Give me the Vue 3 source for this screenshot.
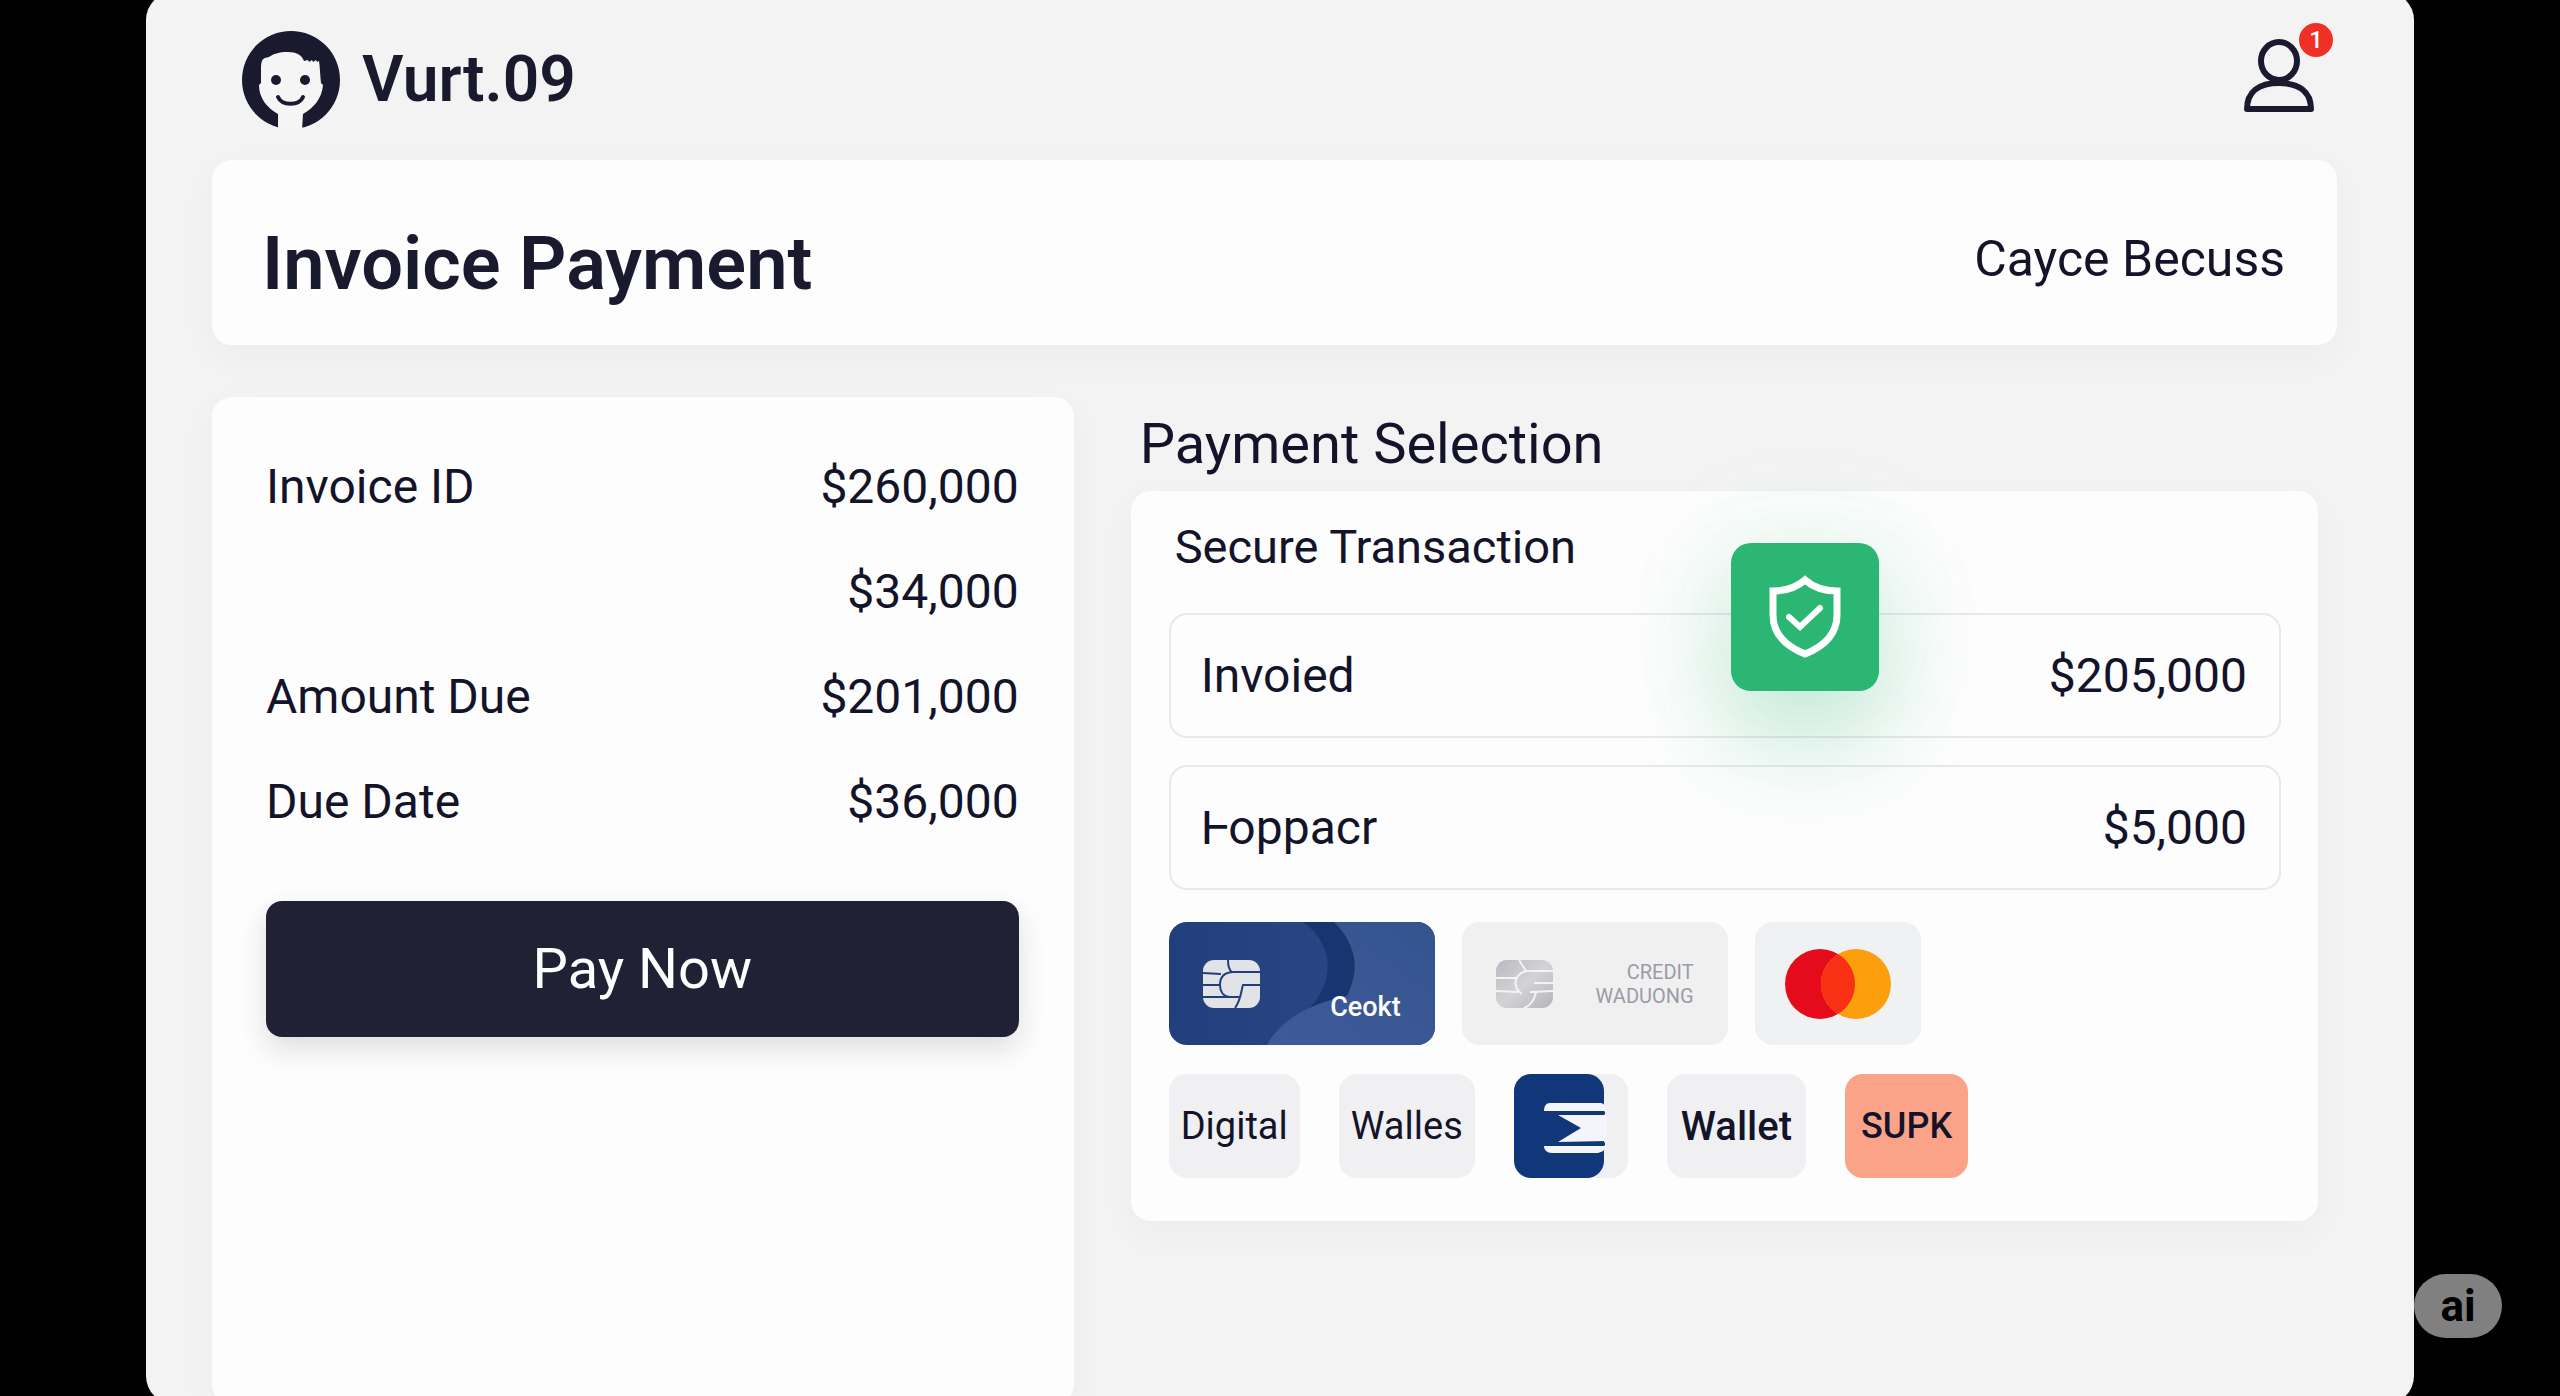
<script setup>
const summary = [
  { label: 'Invoice ID', value: '$260,000' },
  { label: '', value: '$34,000' },
  { label: 'Amount Due', value: '$201,000' },
  { label: 'Due Date', value: '$36,000' },
]

const lines = [
  { label: 'Invoied', value: '$205,000' },
  { label: 'Ⱶoppacr', value: '$5,000' },
]
</script>

<template>
  <div class="page">
    <main class="panel">
      <header class="topbar">
        <a class="brand" href="#">
          <svg class="brand-mark" viewBox="0 0 98 98" aria-hidden="true">
            <circle cx="49" cy="49" r="49" fill="#1a1a2f" />
            <path
              fill="#f5f5f5"
              d="M36 99V83C25 77 17 67 17 54L19 52V38C19 31 20 28 23 27L27 26C31 23 37 21 46 21C54 21 60 24 62 30L66 29L67 31L70 29L71 31L74 29L75 31L77 30C78 36 78 44 79 52L81 54C80 67 72 77 61 83L60 99Z"
            />
            <circle cx="34" cy="49" r="5" fill="#1a1a2f" />
            <circle cx="63" cy="49" r="5" fill="#1a1a2f" />
            <path d="M36 66C40 75 57 75 61 66" fill="none" stroke="#1a1a2f" stroke-width="4" stroke-linecap="round" />
          </svg>
          <span>Vurt.09</span>
        </a>
        <button class="account" type="button" aria-label="Account, 1 notification">
          <svg viewBox="0 0 70 74" aria-hidden="true">
            <g fill="none" stroke="#1a1a2f" stroke-width="6" stroke-linejoin="round">
              <ellipse cx="35" cy="22" rx="18" ry="19" />
              <path d="M3 70C3 53 15 44 35 44S67 53 67 70Z" />
            </g>
          </svg>
          <span class="count">1</span>
        </button>
      </header>

      <section class="card heading">
        <h1>Invoice Payment</h1>
        <span class="customer">Cayce Becuss</span>
      </section>

      <div class="columns">
        <section class="card summary">
          <dl>
            <div v-for="row in summary" :key="row.value" class="row">
              <dt>{{ row.label }}</dt>
              <dd>{{ row.value }}</dd>
            </div>
          </dl>
          <button class="pay" type="button">Pay Now</button>
        </section>

        <section class="selection">
          <h2>Payment Selection</h2>
          <div class="card methods">
            <h3>Secure Transaction</h3>
            <div class="lines">
              <div v-for="line in lines" :key="line.label" class="line">
                <span>{{ line.label }}</span>
                <span>{{ line.value }}</span>
              </div>
            </div>

            <div class="cards">
              <button class="bank blue" type="button">
                <svg class="waves" viewBox="0 0 266 123" preserveAspectRatio="none" aria-hidden="true">
                  <defs>
                    <linearGradient id="deep" x1="0" x2="1">
                      <stop offset="0" stop-color="#213f7c" />
                      <stop offset="1" stop-color="#2c4a86" />
                    </linearGradient>
                    <linearGradient id="light" x1="0" y1="1" x2="1" y2="0">
                      <stop offset="0" stop-color="#3d5b9a" />
                      <stop offset="1" stop-color="#34548e" />
                    </linearGradient>
                  </defs>
                  <rect width="266" height="123" fill="url(#deep)" />
                  <path fill="#17366f" d="M134 0C165 22 168 60 137 90L178 74C190 50 190 25 165 0Z" />
                  <path fill="url(#light)" d="M165 0C190 25 190 50 178 74C150 80 115 92 98 123H266V0Z" />
                </svg>
                <svg class="chip" viewBox="0 0 57 48" aria-hidden="true">
                  <rect width="57" height="48" rx="11" fill="#e2e3e7" />
                  <path
                    fill="none"
                    stroke="#213f7c"
                    stroke-width="2"
                    d="M0 13L18 14M0 25H17M0 37H37M25 0C25 6 26 10 29 12M57 12H31C21 12 17 17 17 25C17 31 20 36 26 37M57 25H40C38 31 38 40 32 48"
                  />
                </svg>
                <span class="bank-name">Ceokt</span>
              </button>
              <button class="bank grey" type="button">
                <svg class="chip" viewBox="0 0 57 48" aria-hidden="true">
                  <defs>
                    <linearGradient id="silver" x1="0" y1="0" x2="1" y2="1">
                      <stop offset="0" stop-color="#b9b9bf" />
                      <stop offset="0.5" stop-color="#d3d3d7" />
                      <stop offset="1" stop-color="#b4b4ba" />
                    </linearGradient>
                  </defs>
                  <rect width="57" height="48" rx="11" fill="url(#silver)" />
                  <path
                    fill="none"
                    stroke="#f4f4f5"
                    stroke-width="2"
                    d="M0 18H20M0 31L22 32M23 0L30 11M57 11H32C22 12 18 20 20 26C21 30 23 32 26 34M38 23H57M34 32L57 31M40 32C38 41 35 45 28 48"
                  />
                </svg>
                <span class="bank-note">CREDIT<br />WADUONG</span>
              </button>
              <button class="bank network" type="button" aria-label="Mastercard">
                <svg viewBox="0 0 106 70" aria-hidden="true">
                  <circle cx="35" cy="35" r="35" fill="#e50b1c" />
                  <circle cx="71" cy="35" r="35" fill="#fb9f0c" />
                  <path fill="#f83014" d="M53 5A35 35 0 0 1 53 65A35 35 0 0 1 53 5Z" />
                </svg>
              </button>
            </div>

            <div class="wallets">
              <button class="tile" type="button">Digital</button>
              <button class="tile" type="button">Walles</button>
              <button class="tile logo" type="button" aria-label="Bank wallet">
                <svg viewBox="0 0 114 104" aria-hidden="true">
                  <rect width="90" height="104" rx="17" fill="#10377a" />
                  <path
                    fill="#f3f5fa"
                    d="M30 37C30 32 32 29 36 29H87C91 30 92 33 92 37ZM44 41H93V67L44 68L67 54ZM30 72H93C90 77 87 79 82 79H38C33 79 30 76 30 72Z"
                  />
                  <path stroke="#10377a" stroke-width="3" d="M60 39H91M60 70H91" />
                </svg>
              </button>
              <button class="tile strong" type="button">Wallet</button>
              <button class="tile coral" type="button">SUPK</button>
            </div>

            <div class="shield">
              <svg viewBox="0 0 148 148" aria-hidden="true">
                <g fill="none" stroke="#fff" stroke-width="7">
                  <path d="M74 37C66 44 55 48 42 48V72C42 90 54 103 74 111C94 103 106 90 106 72V48C93 48 82 44 74 37Z" />
                  <path d="M58 74L69 84L89 65" stroke-width="6" stroke-linecap="round" />
                </g>
              </svg>
            </div>
          </div>
        </section>
      </div>
    </main>
    <span class="ai">ai</span>
  </div>
</template>

<style>
body {
  background: #000;
}
</style>

<style scoped>
.page {
  display: grid;
  grid-template-columns: 146px 1fr 146px;
  height: 100vh;
  overflow: hidden;
  background: #000;
  color: #13132a;
  font-family: Roboto, "Liberation Sans", "DejaVu Sans", sans-serif;
  font-size: 48px;
}

h1,
h2,
h3,
dl,
dd {
  margin: 0;
  font-weight: 400;
}

button {
  border: 0;
  padding: 0;
  color: inherit;
  font: inherit;
  cursor: pointer;
}

svg {
  display: block;
}

.panel {
  grid-column: 2;
  display: flex;
  flex-direction: column;
  box-sizing: border-box;
  min-height: calc(100vh + 16px);
  margin: -8px 0;
  padding: 39px 77px 0 66px;
  border-radius: 28px;
  background: #f3f3f3;
}

.topbar {
  display: flex;
  justify-content: space-between;
  align-items: flex-start;
  padding: 0 23px 0 30px;
}

.brand {
  display: flex;
  align-items: center;
  gap: 22px;
  color: #1a1a2f;
  font-size: 64px;
  font-weight: 600;
  line-height: 96px;
  text-decoration: none;
}

.brand-mark {
  width: 98px;
  height: 98px;
}

.account {
  position: relative;
  margin-top: 8px;
  background: none;
}

.account svg {
  width: 70px;
  height: 74px;
}

.count {
  position: absolute;
  top: -16px;
  right: -19px;
  width: 34px;
  border-radius: 50%;
  background: #f03024;
  color: #fff;
  font-size: 24px;
  font-weight: 500;
  line-height: 34px;
  text-align: center;
}

.card {
  border-radius: 20px;
  background: #fdfdfd;
  box-shadow: 0 12px 40px rgba(0, 0, 0, 0.03);
}

.heading {
  display: flex;
  justify-content: space-between;
  align-items: flex-start;
  margin-top: 31px;
  padding: 59px 52px 36px 50px;
}

h1 {
  color: #1a1a2f;
  font-size: 74px;
  font-weight: 600;
  line-height: 90px;
}

.customer {
  font-size: 50px;
  line-height: 80px;
}

.columns {
  display: grid;
  flex: 1;
  grid-template-columns: 5fr 7fr;
  gap: 57px;
  margin-top: 52px;
}

.summary {
  padding: 37px 55px 37px 54px;
}

.row {
  display: flex;
  justify-content: space-between;
  line-height: 105px;
}

dd {
  margin-left: auto;
}

.pay {
  width: 100%;
  margin-top: 47px;
  border-radius: 16px;
  background: #212136;
  box-shadow: 0 12px 28px rgba(33, 33, 54, 0.14);
  color: #fff;
  font-size: 56px;
  line-height: 136px;
}

.selection {
  padding-right: 19px;
}

h2 {
  padding-left: 9px;
  font-size: 56px;
  line-height: 94px;
}

.methods {
  position: relative;
  padding: 22px 37px 43px 38px;
}

h3 {
  margin-bottom: 32px;
  padding-left: 6px;
  font-size: 47px;
  line-height: 68px;
}

.lines {
  position: relative;
  z-index: 1;
  display: grid;
  gap: 27px;
}

.line {
  display: flex;
  justify-content: space-between;
  padding: 0 32px 0 30px;
  border: 2px solid #e8e8ed;
  border-radius: 18px;
  line-height: 121px;
}

.shield {
  position: absolute;
  z-index: 2;
  top: 52px;
  right: 37%;
  width: 148px;
  height: 148px;
  border-radius: 20px;
  background: #2cb673;
  box-shadow:
    0 0 90px 30px rgba(44, 182, 115, 0.05),
    0 48px 100px rgba(44, 182, 115, 0.26);
}

.cards {
  display: flex;
  gap: 27px;
  margin-top: 32px;
}

.bank {
  position: relative;
  display: flex;
  justify-content: space-between;
  align-items: center;
  box-sizing: border-box;
  width: 266px;
  height: 123px;
  padding: 0 34px;
  overflow: hidden;
  border-radius: 18px;
  background: #f0f0f1;
}

.waves {
  position: absolute;
  inset: 0;
  width: 100%;
  height: 100%;
}

.chip {
  position: relative;
  width: 57px;
  height: 48px;
}

.bank-name {
  position: relative;
  align-self: flex-end;
  padding-bottom: 20px;
  color: #fff;
  font-size: 27px;
  font-weight: 500;
  line-height: 36px;
}

.bank-note {
  color: #9b9ba6;
  font-size: 20px;
  line-height: 24px;
  text-align: right;
}

.network {
  justify-content: center;
  width: 166px;
  padding: 0;
  background: #f0f1f2;
}

.network svg {
  width: 106px;
  height: 70px;
}

.wallets {
  display: flex;
  gap: 39px;
  margin-top: 29px;
}

.tile {
  height: 104px;
  padding: 0 12px;
  border-radius: 18px;
  background: #f0f0f2;
  font-size: 38px;
}

.logo {
  padding: 0;
}

.logo svg {
  width: 114px;
  height: 104px;
}

.strong {
  font-size: 40px;
  font-weight: 500;
  padding: 0 14px;
}

.coral {
  padding: 0 16px;
  background: #fba388;
  font-size: 36px;
  font-weight: 500;
}

.ai {
  align-self: end;
  justify-self: start;
  width: 88px;
  margin-bottom: 58px;
  border-radius: 32px;
  background: #808080;
  color: #000;
  font-size: 44px;
  font-weight: 700;
  line-height: 64px;
  text-align: center;
}
</style>
